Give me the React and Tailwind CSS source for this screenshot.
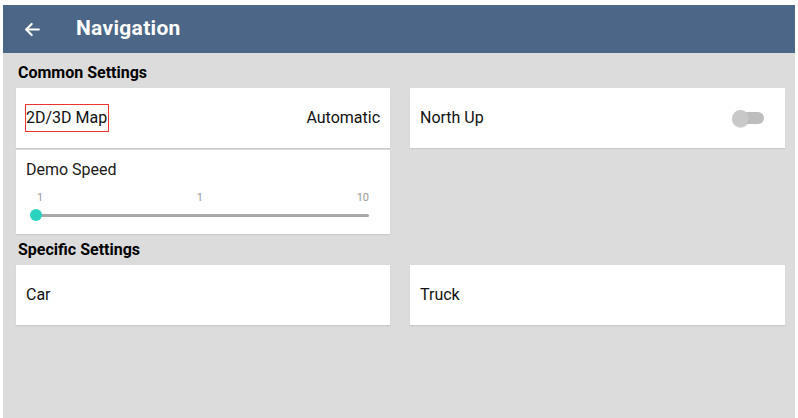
import React from 'react';

// Settings row card with label on the left and optional content on the right
const Row = ({ children, className = '' }) => (
  <div className={`bg-white h-[60px] flex items-center justify-between px-[10px] shadow-[0_1px_1px_rgba(0,0,0,0.08)] ${className}`}>
    {children}
  </div>
);

const SectionTitle = ({ children, className = '' }) => (
  <div className={`h-[20px] pl-[15px] text-[16px] leading-[20px] font-bold text-black ${className}`}>{children}</div>
);

const Toggle = () => (
  <div className="relative w-[34px] h-[20px] mr-[9px] flex items-center">
    <div className="absolute left-[4px] right-[2px] h-[12px] rounded-full bg-[#bdbdbd]" />
    <div className="absolute left-0 w-[17px] h-[17px] rounded-full bg-[#c8c8c8] shadow-[0_1px_1px_rgba(0,0,0,0.15)]" />
  </div>
);

const DemoSlider = () => (
  <div className="bg-white h-[84px] px-[10px] pt-[9px] shadow-[0_1px_1px_rgba(0,0,0,0.08)]">
    <div className="text-[16px] leading-[22px] text-[#1a1a1a]">Demo Speed</div>
    <div className="relative mt-[10px] ml-[10px] mr-[11px] flex justify-between text-[11px] leading-[14px] text-[#9a9a9a]">
      <span className="pl-[1px]">1</span>
      <span>1</span>
      <span>10</span>
    </div>
    <div className="relative mt-[9px] ml-[10px] mr-[11px] h-[3px] bg-[#a9a9a9] rounded-full">
      <div className="absolute -left-[6px] -top-[5px] w-[12px] h-[12px] rounded-full bg-[#2ad3bf]" />
    </div>
  </div>
);

export default function App() {
  return (
    <div className="w-[798px] h-[418px] bg-white pt-[5px] pl-[3px] pr-[3px] overflow-hidden" style={{ fontFamily: 'Roboto, "Noto Sans", sans-serif' }}>
      <div className="bg-[#4b6686] h-[48px] flex items-center pl-[20px]">
        <svg width="19" height="19" viewBox="0 0 24 24" fill="none" stroke="white" strokeWidth="2.6" strokeLinecap="round" strokeLinejoin="round">
          <path d="M20 12H4.5" />
          <path d="M11 5l-7 7 7 7" />
        </svg>
        <div className="ml-[34px] text-white text-[21px] font-bold tracking-[0.3px]">Navigation</div>
      </div>

      <div className="bg-[#dcdcdc] h-[365px] pt-[10px]">
        <SectionTitle className="mb-[5px]">Common Settings</SectionTitle>
        <div className="grid grid-cols-[374px_375px] gap-x-[20px] pl-[13px] items-start">
          <div className="flex flex-col gap-[2px]">
            <Row>
              <span className="text-[16px] text-[#111] border border-[#e33] -ml-[1px] pr-[1px] py-[4px] leading-[18px]">2D/3D Map</span>
              <span className="text-[16px] text-[#111]">Automatic</span>
            </Row>
            <DemoSlider />
          </div>
          <Row>
            <span className="text-[16px] text-[#111]">North Up</span>
            <Toggle />
          </Row>
        </div>

        <SectionTitle className="mt-[6px] mb-[5px]">Specific Settings</SectionTitle>
        <div className="grid grid-cols-[374px_375px] gap-x-[20px] pl-[13px]">
          <Row>
            <span className="text-[16px] text-[#111]">Car</span>
          </Row>
          <Row>
            <span className="text-[16px] text-[#111]">Truck</span>
          </Row>
        </div>
      </div>
    </div>
  );
}
